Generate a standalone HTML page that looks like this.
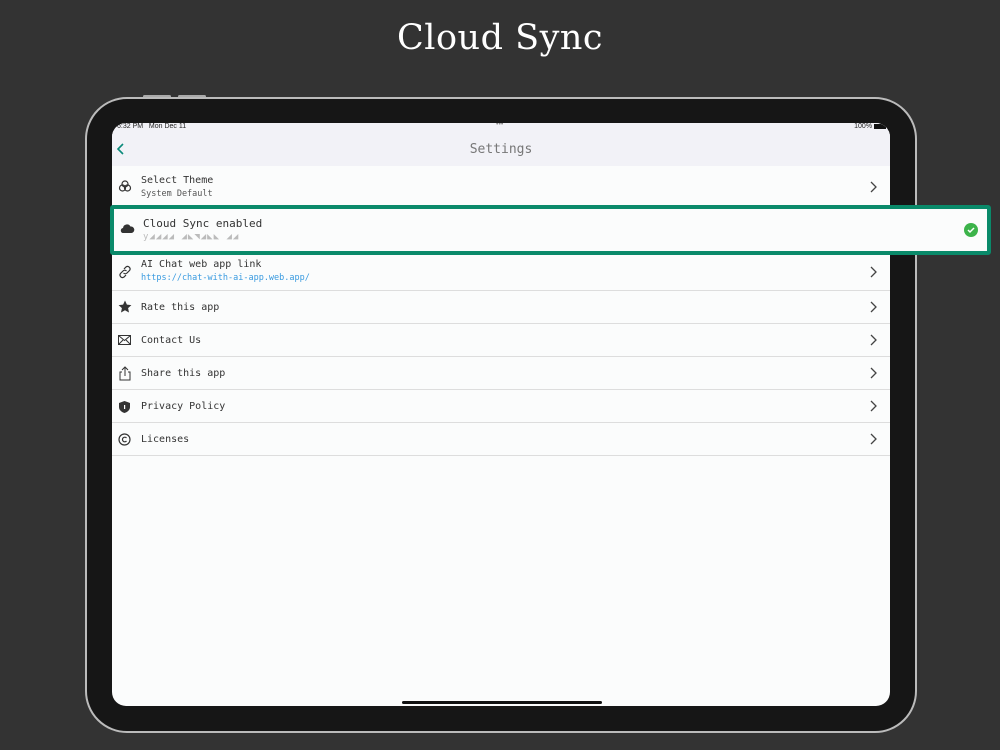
<!DOCTYPE html>
<html><head><style>
body{margin:0;width:1000px;height:750px;background:#333;position:relative;overflow:hidden;font-family:"DejaVu Sans Mono","Liberation Mono",monospace}
.title{position:absolute;top:18px;width:1000px;text-align:center;color:#fff;font-family:"DejaVu Serif","Liberation Serif",serif;font-size:35px;letter-spacing:0.5px}
.frame{position:absolute;left:85px;top:97px;width:828px;height:632px;border:2px solid #bbb;border-radius:42px;background:#161616}
.btn{position:absolute;top:95px;height:3px;background:#aaa;border-radius:2px}
.screen{position:absolute;left:112px;top:123px;width:778px;height:583px;background:#fbfcfc;border-radius:14px;overflow:hidden}
.sb{position:absolute;top:0;font-size:7px;color:#222;font-family:"Liberation Sans",sans-serif}
.nav{position:absolute;left:0;top:0;width:778px;height:43px;background:#f2f2f7}
.row{position:absolute;left:0;width:778px;border-bottom:1px solid #ddd;background:#fbfcfc}
.t{position:absolute;left:29px;font-size:10px;color:#333}
.s{position:absolute;left:29px;font-size:8.5px;color:#555}
.ch{position:absolute;right:13px}
.ic{position:absolute;left:6px}
</style></head><body>
<div class="title">Cloud Sync</div>
<div class="btn" style="left:143px;width:28px"></div><div class="btn" style="left:178px;width:28px"></div>
<div class="frame"></div>
<div class="screen">
<div class="nav"></div>
<div class="sb" style="left:5px;top:0px">6:32 PM &nbsp; Mon Dec 11</div>
<div class="sb" style="left:384px;top:-2px;color:#888">•••</div>
<div class="sb" style="right:4px;top:0px">100% <span style="display:inline-block;width:12px;height:5px;background:#111;vertical-align:middle"></span></div>
<svg style="position:absolute;left:4px;top:19px" width="10" height="14"><path d="M7 2L2 7L7 12" stroke="#0a8a7a" stroke-width="1.6" fill="none"/></svg>
<div style="position:absolute;top:19px;width:778px;text-align:center;font-size:13px;color:#777">Settings</div>
<div class="row" style="top:43px;height:40px">
<svg class="ic" style="top:13px" width="14" height="14"><g fill="none" stroke="#333" stroke-width="1.2"><circle cx="7" cy="5" r="3"/><circle cx="4.5" cy="9" r="3"/><circle cx="9.5" cy="9" r="3"/></g></svg>
<div class="t" style="top:9px">Select Theme</div><div class="s" style="top:23px">System Default</div>
<svg class="ch" style="top:15px" width="8" height="12"><path d="M2 1l5 5-5 5" fill="none" stroke="#444" stroke-width="1.3"/></svg></div>
<div class="row" style="top:131px;height:36px">
<svg class="ic" style="top:11px" width="14" height="14"><g fill="none" stroke="#333" stroke-width="1.2"><path d="M6 4l2-2a2.5 2.5 0 0 1 3.5 3.5L9 8a2.5 2.5 0 0 1-3.5 0"/><path d="M8 10l-2 2a2.5 2.5 0 0 1-3.5-3.5L5 6a2.5 2.5 0 0 1 3.5 0"/></g></svg>
<div class="t" style="top:5px">AI Chat web app link</div><div class="s" style="top:19px;color:#3a9be0">https://chat-with-ai-app.web.app/</div>
<svg class="ch" style="top:12px" width="8" height="12"><path d="M2 1l5 5-5 5" fill="none" stroke="#444" stroke-width="1.3"/></svg></div>
<div class="row" style="top:168px;height:32px"><svg class="ic" style="top:9px" width="14" height="14"><path d="M7 0.5l1.9 4.1 4.5.5-3.3 3 .9 4.4L7 10.3 3 12.5l.9-4.4-3.3-3 4.5-.5z" fill="#333"/></svg><div class="t" style="top:11px">Rate this app</div><svg class="ch" style="top:10px" width="8" height="12"><path d="M2 1l5 5-5 5" fill="none" stroke="#444" stroke-width="1.3"/></svg></div>
<div class="row" style="top:201px;height:32px"><svg class="ic" style="top:11px" width="14" height="11"><rect x="0.5" y="0.5" width="12" height="9" fill="none" stroke="#333"/><path d="M0.5 0.5L6.5 5.5L12.5 0.5M0.5 9.5L5 5M12.5 9.5L8 5" fill="none" stroke="#333"/></svg><div class="t" style="top:11px">Contact Us</div><svg class="ch" style="top:10px" width="8" height="12"><path d="M2 1l5 5-5 5" fill="none" stroke="#444" stroke-width="1.3"/></svg></div>
<div class="row" style="top:234px;height:32px"><svg class="ic" style="top:9px" width="14" height="15"><path d="M4 6H2v8h10V6h-2M7 10V1M4 4l3-3 3 3" fill="none" stroke="#333"/></svg><div class="t" style="top:11px">Share this app</div><svg class="ch" style="top:10px" width="8" height="12"><path d="M2 1l5 5-5 5" fill="none" stroke="#444" stroke-width="1.3"/></svg></div>
<div class="row" style="top:267px;height:32px"><svg class="ic" style="top:10px" width="14" height="14"><path d="M6.5 1L12 3v4c0 3-2.5 5-5.5 6C3.5 12 1 10 1 7V3z" fill="#333"/><rect x="6" y="5" width="1.2" height="4" fill="#fff"/></svg><div class="t" style="top:11px">Privacy Policy</div><svg class="ch" style="top:10px" width="8" height="12"><path d="M2 1l5 5-5 5" fill="none" stroke="#444" stroke-width="1.3"/></svg></div>
<div class="row" style="top:300px;height:32px"><svg class="ic" style="top:10px" width="14" height="14"><circle cx="6.5" cy="6.5" r="5.5" fill="none" stroke="#333" stroke-width="1.2"/><path d="M8.5 5A2.3 2.3 0 1 0 8.5 8" fill="none" stroke="#333" stroke-width="1.2"/></svg><div class="t" style="top:11px">Licenses</div><svg class="ch" style="top:10px" width="8" height="12"><path d="M2 1l5 5-5 5" fill="none" stroke="#444" stroke-width="1.3"/></svg></div>
<div style="position:absolute;left:290px;top:578px;width:200px;height:3px;background:#111;border-radius:2px"></div>
</div>
<div style="position:absolute;left:110px;top:205px;width:873px;height:42px;border:4px solid #0a8a6a;border-radius:3px;background:#fbfcfc">
<svg style="position:absolute;left:5px;top:14px" width="16" height="12"><path d="M4 5A4 4 0 0 1 11.5 3.5A3 3 0 0 1 12.5 10H3.5A2.6 2.6 0 0 1 4 5z" fill="#333"/></svg>
<div style="position:absolute;left:29px;top:8px;font-size:11px;color:#333">Cloud Sync enabled</div>
<div style="position:absolute;left:29px;top:23px;font-size:9px;color:#bbb;letter-spacing:1px">y◢◢◢◢ ◢◣◥◢◣◣ ◢◢</div>
<svg style="position:absolute;left:850px;top:14px" width="14" height="14"><circle cx="7" cy="7" r="7" fill="#3cb34a"/><path d="M4 7l2 2 4-4" stroke="#fff" stroke-width="1.5" fill="none"/></svg>
</div>
</body></html>
